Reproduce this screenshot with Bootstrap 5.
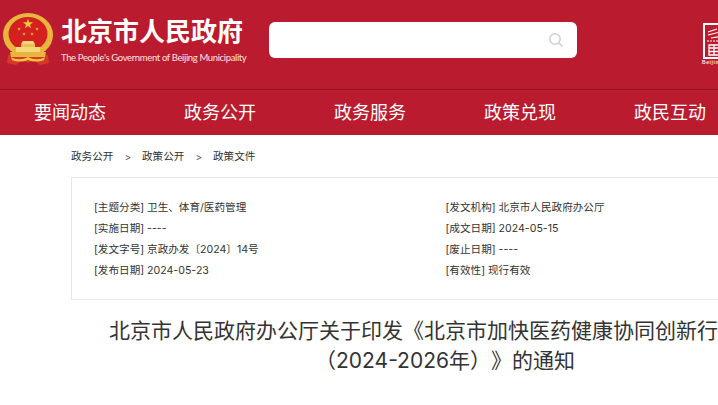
<!DOCTYPE html>
<html lang="en">
<head>
    <meta charset="UTF-8">
    <meta name="viewport" content="width=device-width">
    <link href="https://cdn.jsdelivr.net/npm/bootstrap@5.3.3/dist/css/bootstrap.min.css" rel="stylesheet">
    <title>北京市人民政府</title>
    <style>
        html, body { overflow: hidden; height: 405px; }
        body { font-family: Inter, "Noto Sans CJK SC", sans-serif; color: #333; background: #fff; text-spacing-trim: space-all; }
        .page-wrap { width: 1000px; }
        .top-head { height: 89px; background: #bb1b2e; padding: 13px 0 0 3px; }
        .emblem { width: 50px; height: 54px; flex: none; }
        .site-name { color: #fff; margin-left: 8px; width: 200px; }
        .site-cn { font-size: 26px; line-height: 30px; font-weight: 700; margin-top: 4px; white-space: nowrap; }
        .site-en { font-family: Lato, sans-serif; font-size: 9.5px; letter-spacing: -.36px; line-height: 12px; margin-top: 5px; color: #fbe3e3; white-space: nowrap; }
        .search-box { width: 308px; height: 36px; background: #fff; border-radius: 6px; margin: 9px 0 0 8px; padding-right: 13px; }
        .gov-logo { width: 30px; height: 46px; margin: 10px 0 0 126px; flex: none; overflow: visible; }
        .gov-logo text { font-family: "Liberation Sans", sans-serif; font-size: 5px; font-weight: 700; letter-spacing: .6px; fill: #fbe3e3; }
        .main-nav { height: 46px; background: #bb1b2e; border-top: 1px solid #8f1524; padding-left: 34px; gap: 78px; }
        .main-nav a { color: #fff; font-size: 18px; line-height: 45px; text-decoration: none; white-space: nowrap; }
        .crumbs { margin: 14px 0 0 71px; font-size: 10.6px; line-height: 16px; gap: 11px; color: #333; }
        .crumbs .sep { font-size: 10px; color: #555; }
        .info-box { width: 754px; height: 123px; margin: 12px 0 0 71px; border: 1px solid #e8e8e8; padding: 19px 22px 0; font-size: 10.6px; line-height: 21px; }
        .info-col { width: 351.5px; flex: none; white-space: nowrap; }
        .doc-title { width: 680px; margin: 16px 0 0 105px; text-align: center; font-size: 21px; line-height: 30px; font-weight: 400; color: #333; }
    </style>
</head>
<body>
<div class="page-wrap">
    <header class="top-head d-flex">
        <svg class="emblem" viewBox="0 0 50 54">
            <defs>
                <polygon id="star" points="0,-1 .225,-.309 .951,-.309 .363,.118 .588,.809 0,.382 -.588,.809 -.363,.118 -.951,-.309 -.225,-.309"/>
            </defs>
            <path d="M5 42h40l1 8-9 2-6-5-6 3-6-3-6 5-9-2z" fill="#d8372a"/>
            <ellipse cx="25" cy="22" rx="25" ry="22" fill="#e8b63f"/>
            <ellipse cx="25" cy="21" rx="19.5" ry="17" fill="#d4201f"/>
            <g fill="#f2c33d">
                <use href="#star" transform="translate(25 11) scale(5.5)"/>
                <use href="#star" transform="translate(16 16) scale(2)"/>
                <use href="#star" transform="translate(34 16) scale(2)"/>
                <use href="#star" transform="translate(21 21) scale(2)"/>
                <use href="#star" transform="translate(29 21) scale(2)"/>
            </g>
            <path d="M20 28h10l2 3H18z" fill="#f4d777"/>
            <path d="M18 31h14v3H18z" fill="#e9c057"/>
            <path d="M13 34h24v5H13z" fill="#f4d777"/>
            <path d="M7 39h36l-1 5H8z" fill="#e8b63f"/>
            <path d="M8 44c5 3 11 3 17 0 6 3 12 3 17 0l-1 3c-5 2-11 2-16 0-5 2-11 2-16 0z" fill="#f2c33d"/>
        </svg>
        <div class="site-name">
            <div class="site-cn">北京市人民政府</div>
            <div class="site-en">The People's Government of Beijing Municipality</div>
        </div>
        <div class="search-box d-flex align-items-center justify-content-end">
            <svg width="16" height="16" viewBox="0 0 16 16" fill="none" stroke="#cfcfcf" stroke-width="1.5">
                <circle cx="7" cy="7" r="5.2"/>
                <path d="M11 11l3.5 3.5"/>
            </svg>
        </div>
        <svg class="gov-logo" viewBox="0 0 30 46">
            <rect x="1" y="1" width="28" height="34" fill="#bb1b2e" stroke="#fff" stroke-width="2"/>
            <path d="M5 9l9-3M5 12l16-4M8 15l12-2" stroke="#fff" stroke-width="1.2" fill="none"/>
            <path d="M4 18h22" stroke="#fff" stroke-width="1" stroke-dasharray="2 1"/>
            <path d="M6 22h18v10H6z M6 25h18 M6 28.5h18 M11 22v10 M18 22v10" stroke="#fff" stroke-width="1.3" fill="none"/>
            <text x="-1" y="41">Beijing</text>
        </svg>
    </header>
    <nav class="main-nav d-flex">
        <a href="#">要闻动态</a>
        <a href="#">政务公开</a>
        <a href="#">政务服务</a>
        <a href="#">政策兑现</a>
        <a href="#">政民互动</a>
    </nav>
    <div class="crumbs d-flex align-items-center">
        <span>政务公开</span><span class="sep">&gt;</span>
        <span>政策公开</span><span class="sep">&gt;</span>
        <span>政策文件</span>
    </div>
    <div class="info-box d-flex">
        <div class="info-col">
            <div>[主题分类] 卫生、体育/医药管理</div>
            <div>[实施日期] ----</div>
            <div>[发文字号] 京政办发〔2024〕14号</div>
            <div>[发布日期] 2024-05-23</div>
        </div>
        <div class="info-col">
            <div>[发文机构] 北京市人民政府办公厅</div>
            <div>[成文日期] 2024-05-15</div>
            <div>[废止日期] ----</div>
            <div>[有效性] 现行有效</div>
        </div>
    </div>
    <h1 class="doc-title">北京市人民政府办公厅关于印发《北京市加快医药健康协同创新行动计划（2024-2026年）》的通知</h1>
</div>
<script src="https://cdn.jsdelivr.net/npm/bootstrap@5.3.3/dist/js/bootstrap.bundle.min.js"></script>
</body>
</html>
